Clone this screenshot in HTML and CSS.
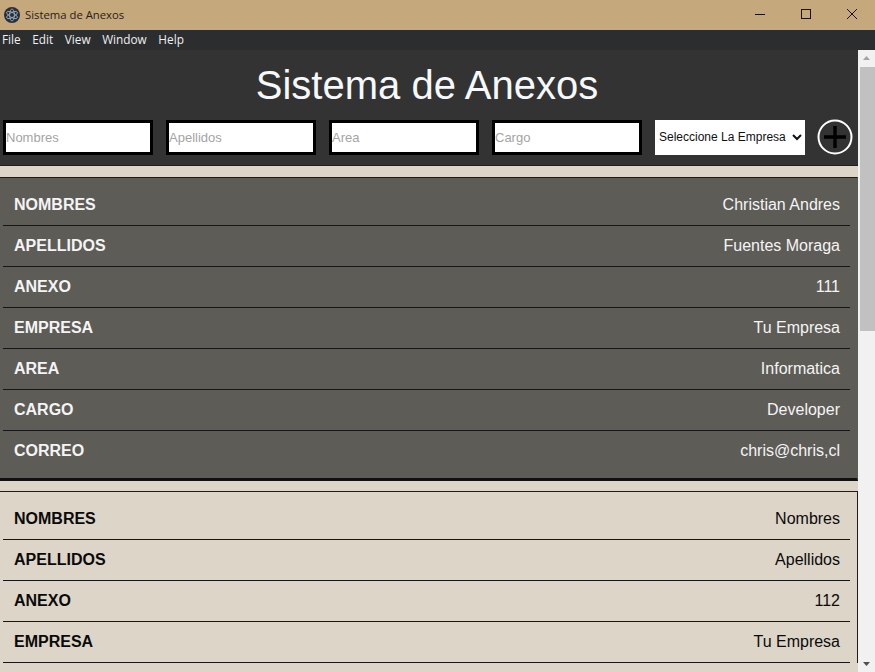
FILE: index.html
```html
<!DOCTYPE html>
<html lang="es">
<head>
<meta charset="utf-8">
<title>Sistema de Anexos</title>
<link rel="stylesheet" href="styles.css">
</head>
<body>
<div class="window">
  <div class="titlebar">
    <svg class="appicon" viewBox="0 0 16 16" width="16" height="16">
      <circle cx="8" cy="8" r="8" fill="#2b2e3b"/>
      <g fill="none" stroke="#9fb8c4" stroke-width=".8">
        <ellipse cx="8" cy="8" rx="6" ry="2.4" transform="rotate(30 8 8)"/>
        <ellipse cx="8" cy="8" rx="6" ry="2.4" transform="rotate(90 8 8)"/>
        <ellipse cx="8" cy="8" rx="6" ry="2.4" transform="rotate(150 8 8)"/>
      </g>
    </svg>
    <span class="wintitle">Sistema de Anexos</span>
    <div class="winctrls">
      <svg class="ctrl" viewBox="0 0 46 30" width="46" height="30"><path d="M18 14.5h10" stroke="#1a1208" stroke-width="1" fill="none"/></svg>
      <svg class="ctrl" viewBox="0 0 46 30" width="46" height="30"><rect x="18.5" y="9.5" width="9" height="9" stroke="#1a1208" stroke-width="1" fill="none"/></svg>
      <svg class="ctrl" viewBox="0 0 46 30" width="46" height="30"><path d="M18 9l10 10M28 9l-10 10" stroke="#1a1208" stroke-width="1" fill="none"/></svg>
    </div>
  </div>
  <nav class="menubar">
    <span>File</span><span>Edit</span><span>View</span><span>Window</span><span>Help</span>
  </nav>
  <div class="viewport">
    <main class="page">
      <header class="head">
        <h1>Sistema de Anexos</h1>
        <form class="filters">
          <input class="field" placeholder="Nombres">
          <input class="field" placeholder="Apellidos">
          <input class="field" placeholder="Area">
          <input class="field" placeholder="Cargo">
          <select class="company"><option>Seleccione La Empresa</option></select>
          <button class="add" type="button" aria-label="Agregar">
            <svg viewBox="0 0 36 36" width="36" height="36"><circle cx="18" cy="18" r="16.5" fill="none" stroke="#fff" stroke-width="2"/><path d="M18 7v22M7 18h22" stroke="#000" stroke-width="3.4" fill="none"/></svg>
          </button>
        </form>
      </header>
      <section class="card dark">
        <div class="row"><b>NOMBRES</b><span>Christian Andres</span></div>
        <div class="row"><b>APELLIDOS</b><span>Fuentes Moraga</span></div>
        <div class="row"><b>ANEXO</b><span>111</span></div>
        <div class="row"><b>EMPRESA</b><span>Tu Empresa</span></div>
        <div class="row"><b>AREA</b><span>Informatica</span></div>
        <div class="row"><b>CARGO</b><span>Developer</span></div>
        <div class="row"><b>CORREO</b><span>chris@chris,cl</span></div>
      </section>
      <section class="card light">
        <div class="row"><b>NOMBRES</b><span>Nombres</span></div>
        <div class="row"><b>APELLIDOS</b><span>Apellidos</span></div>
        <div class="row"><b>ANEXO</b><span>112</span></div>
        <div class="row"><b>EMPRESA</b><span>Tu Empresa</span></div>
      </section>
    </main>
    <div class="scrollbar" aria-hidden="true">
      <svg class="arrow" viewBox="0 0 17 17" width="17" height="17"><path d="M5 10l3.5-4 3.5 4z" fill="#a3a3a3"/></svg>
      <div class="track"><div class="thumb"></div></div>
      <svg class="arrow" viewBox="0 0 17 17" width="17" height="17"><path d="M5 7l3.5 4 3.5-4z" fill="#505050"/></svg>
    </div>
  </div>
</div>
</body>
</html>
```
FILE: styles.css
```css
* { box-sizing: border-box; }
html, body { margin: 0; height: 100%; overflow: hidden; }
body { font-family: "Liberation Sans", Arial, sans-serif; }
.window { display: flex; flex-direction: column; height: 672px; width: 875px; }
.titlebar {
  height: 30px; flex: none; display: flex; align-items: center;
  background: #c6a87d; padding-left: 4px; color: #2a2018;
}
.appicon { flex: none; }
.wintitle { margin-left: 5px; margin-bottom: 2px; font: 11.3px "Open Sans", "Noto Sans", sans-serif; }
.winctrls { margin-left: auto; display: flex; }
.ctrl { display: block; }
.menubar {
  height: 20px; flex: none; background: #2b2d2f; color: #f0f0f0;
  display: flex; align-items: center; gap: 11.6px; padding: 0 0 2px 2px;
  font: 11.8px "Open Sans", "Noto Sans", sans-serif;
}
.viewport { flex: 1; display: flex; min-height: 0; background: #ddd5c8; }
.page { flex: 1; min-width: 0; overflow: hidden; background: #ddd5c8; }
.head { background: #333; height: 116px; border-bottom: 1px solid #1d1d1d; padding-top: 12px; }
.head h1 {
  margin: 0; height: 46px; line-height: 46px; text-align: center; padding-right: 4px;
  font-size: 40px; font-weight: 400; color: #f6f8fb;
}
.filters { display: flex; align-items: center; margin-top: 11px; padding-left: 3px; }
.field {
  width: 150px; height: 35px; margin-right: 13px; padding: 0;
  border: 3px solid #000; background: #fff; border-radius: 0; outline: 0;
  font: 13px "Liberation Sans", Arial, sans-serif;
}
.field::placeholder { color: #a4a4a4; opacity: 1; }
.company {
  width: 150px; height: 35px; border: 0; border-radius: 0; background: #fff; color: #111;
  padding: 0; font: 12px "Liberation Sans", Arial, sans-serif;
}
.add { width: 36px; height: 36px; margin-left: 12px; padding: 0; border: 0; background: none; }
.add svg { display: block; }
.card { border: 1px solid #1c1c1c; border-left: 0; padding: 7px 7px 0 3px; }
.dark {
  margin-top: 11px; height: 304px; color: #f4f4f4;
  background: #5d5c57; border-bottom: 3px solid #111; border-right-color: #5d5c57;
}
.light { margin-top: 10px; color: #0a0a0a; background: #ddd5c8; border-bottom: 0; }
.row {
  height: 41px; display: flex; justify-content: space-between; align-items: center;
  padding: 0 10px 0 11px; border-bottom: 1px solid #161616; font-size: 16px;
}
.row b { font-weight: 700; }
.dark .row:last-child { border-bottom: 0; height: 40px; }
.scrollbar { width: 17px; flex: none; display: flex; flex-direction: column; background: #f1f1f1; }
.arrow { display: block; flex: none; }
.track { flex: 1; }
.thumb { height: 264px; margin-left: 2px; background: #c1c1c1; }
```
